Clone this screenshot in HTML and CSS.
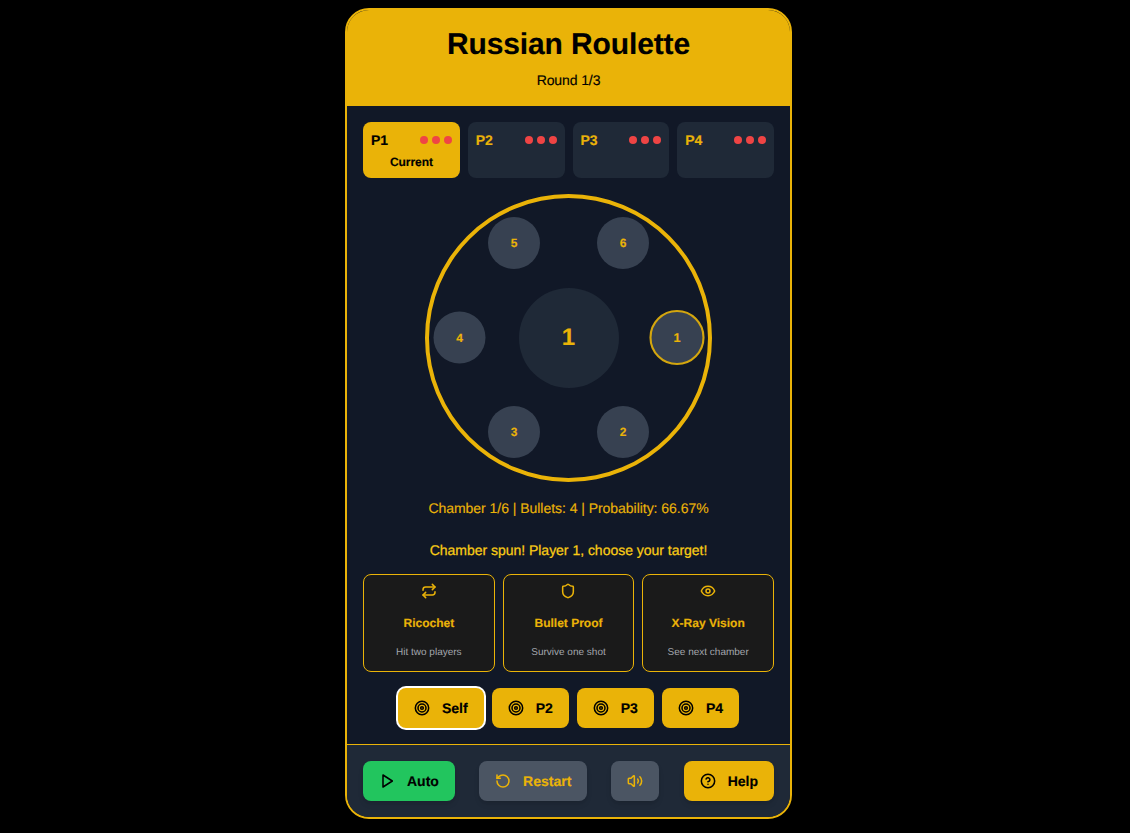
FILE: index.html
```html
<!DOCTYPE html>
<html lang="en">
<head>
<meta charset="utf-8">
<title>Russian Roulette</title>
<link rel="stylesheet" href="styles.css">
</head>
<body>
<div class="game">
  <header class="header">
    <h1>Russian Roulette</h1>
    <p>Round 1/3</p>
  </header>
  <main class="main">
    <div class="players">
      <div class="player current">
        <div class="player-top"><span class="pname">P1</span><span class="lives"><i></i><i></i><i></i></span></div>
        <div class="pstatus">Current</div>
      </div>
      <div class="player">
        <div class="player-top"><span class="pname">P2</span><span class="lives"><i></i><i></i><i></i></span></div>
      </div>
      <div class="player">
        <div class="player-top"><span class="pname">P3</span><span class="lives"><i></i><i></i><i></i></span></div>
      </div>
      <div class="player">
        <div class="player-top"><span class="pname">P4</span><span class="lives"><i></i><i></i><i></i></span></div>
      </div>
    </div>
    <div class="drum">
      <div class="hub">1</div>
      <div class="chamber c1 active">1</div>
      <div class="chamber c2">2</div>
      <div class="chamber c3">3</div>
      <div class="chamber c4">4</div>
      <div class="chamber c5">5</div>
      <div class="chamber c6">6</div>
    </div>
    <p class="stats">Chamber 1/6 | Bullets: 4 | Probability: 66.67%</p>
    <p class="message">Chamber spun! Player 1, choose your target!</p>
    <div class="abilities">
      <div class="ability">
        <svg class="icon" viewBox="0 0 24 24"><path d="m17 2 4 4-4 4"/><path d="M3 11v-1a4 4 0 0 1 4-4h14"/><path d="m7 22-4-4 4-4"/><path d="M21 13v1a4 4 0 0 1-4 4H3"/></svg>
        <div class="ab-title">Ricochet</div>
        <div class="ab-desc">Hit two players</div>
      </div>
      <div class="ability">
        <svg class="icon" viewBox="0 0 24 24"><path d="M20 13c0 5-3.500 7.500-7.660 8.950a1 1 0 0 1-.670-.010C7.500 20.500 4 18 4 13V6a1 1 0 0 1 1-1c2 0 4.500-1.200 6.240-2.720a1.170 1.170 0 0 1 1.520 0C14.510 3.810 17 5 19 5a1 1 0 0 1 1 1z"/></svg>
        <div class="ab-title">Bullet Proof</div>
        <div class="ab-desc">Survive one shot</div>
      </div>
      <div class="ability">
        <svg class="icon" viewBox="0 0 24 24"><path d="M2 12s3-7 10-7 10 7 10 7-3 7-10 7-10-7-10-7Z"/><circle cx="12" cy="12" r="3"/></svg>
        <div class="ab-title">X-Ray Vision</div>
        <div class="ab-desc">See next chamber</div>
      </div>
    </div>
    <div class="targets">
      <button class="target selected"><svg class="icon" viewBox="0 0 24 24"><circle cx="12" cy="12" r="10"/><circle cx="12" cy="12" r="6"/><circle cx="12" cy="12" r="2"/></svg>Self</button>
      <button class="target"><svg class="icon" viewBox="0 0 24 24"><circle cx="12" cy="12" r="10"/><circle cx="12" cy="12" r="6"/><circle cx="12" cy="12" r="2"/></svg>P2</button>
      <button class="target"><svg class="icon" viewBox="0 0 24 24"><circle cx="12" cy="12" r="10"/><circle cx="12" cy="12" r="6"/><circle cx="12" cy="12" r="2"/></svg>P3</button>
      <button class="target"><svg class="icon" viewBox="0 0 24 24"><circle cx="12" cy="12" r="10"/><circle cx="12" cy="12" r="6"/><circle cx="12" cy="12" r="2"/></svg>P4</button>
    </div>
  </main>
  <footer class="footer">
    <button class="fbtn auto"><svg class="icon" viewBox="0 0 24 24"><polygon points="6 3 20 12 6 21 6 3"/></svg>Auto</button>
    <button class="fbtn muted"><svg class="icon" viewBox="0 0 24 24"><path d="M3 12a9 9 0 1 0 9-9 9.750 9.750 0 0 0-6.740 2.740L3 8"/><path d="M3 3v5h5"/></svg>Restart</button>
    <button class="fbtn muted sound"><svg class="icon" viewBox="0 0 24 24"><path d="M11 4.702a.705.705 0 0 0-1.203-.498L6.413 7.587A1.400 1.400 0 0 1 5.416 8H3a1 1 0 0 0-1 1v6a1 1 0 0 0 1 1h2.416a1.400 1.400 0 0 1 .997.413l3.383 3.384A.705.705 0 0 0 11 19.298z"/><path d="M16 9a5 5 0 0 1 0 6"/><path d="M19.364 18.364a9 9 0 0 0 0-12.728"/></svg></button>
    <button class="fbtn help"><svg class="icon" viewBox="0 0 24 24"><circle cx="12" cy="12" r="10"/><path d="M9.090 9a3 3 0 0 1 5.830 1c0 2-3 3-3 3"/><path d="M12 17h.01"/></svg>Help</button>
  </footer>
</div>
</body>
</html>
```
FILE: styles.css
```css
* { box-sizing: border-box; margin: 0; padding: 0; }
html, body { height: 100%; }
body {
  background: #000;
  font-family: "Liberation Sans", Arial, sans-serif;
  text-rendering: geometricPrecision;
  -webkit-text-stroke: 0.15px currentColor;
  padding: 8px 0 0 345px;
}
svg { fill: none; stroke: currentColor; stroke-width: 2.300; stroke-linecap: round; stroke-linejoin: round; flex: none; display: block; }
.icon { width: 16px; height: 16px; }

.game {
  width: 447px;
  height: 811px;
  border: 2px solid #eab308;
  border-radius: 24px;
  overflow: hidden;
  background: #111827;
  display: flex;
  flex-direction: column;
}
.header {
  background: #eab308;
  color: #000;
  text-align: center;
  height: 96px;
  padding-top: 17px;
}
.header h1 { font-size: 30px; line-height: 36px; font-weight: 700; letter-spacing: -0.120px; }
.header p { font-size: 14px; line-height: 20px; margin-top: 7px; letter-spacing: -0.100px; }

.main { flex: 1; padding: 16px; display: flex; flex-direction: column; }
.players { display: grid; grid-template-columns: repeat(4, 1fr); gap: 8px; height: 56px; }
.player { background: #1f2937; border-radius: 8px; padding: 8px; color: #eab308; }
.player.current { background: #eab308; color: #000; }
.player-top { display: flex; justify-content: space-between; align-items: center; height: 20px; }
.pname { font-size: 14px; font-weight: 700; }
.lives { display: flex; gap: 4px; }
.lives i { width: 8px; height: 8px; border-radius: 50%; background: #ef4444; display: block; }
.pstatus { font-size: 12px; font-weight: 700; text-align: center; line-height: 16px; margin-top: 4px; letter-spacing: -0.050px; }

.drum {
  position: relative;
  width: 287px;
  height: 288px;
  border: 4px solid #eab308;
  border-radius: 50%;
  margin: 16px auto 0;
  display: flex;
  align-items: center;
  justify-content: center;
}
.hub {
  width: 100px; height: 100px; border-radius: 50%;
  background: #1f2937; color: #eab308;
  font-size: 24px; font-weight: 700;
  display: flex; align-items: center; justify-content: center;
}
.chamber {
  position: absolute;
  left: 50%; top: 50%;
  width: 52px; height: 52px;
  margin: -26px 0 0 -26.500px;
  border-radius: 50%;
  background: #374151; color: #eab308;
  font-size: 12px; font-weight: 700;
  display: flex; align-items: center; justify-content: center;
}
.c1 { transform: translate(109px, -0.500px) scale(1.060); }
.c2 { transform: translate(55px, 94px); }
.c3 { transform: translate(-54px, 94px); }
.c4 { transform: translate(-108.500px, -0.500px); }
.c5 { transform: translate(-54px, -95px); }
.c6 { transform: translate(55px, -95px); }
.chamber.active { border: 2px solid #d4a60e; }

.stats { color: #eab308; font-size: 14px; line-height: 20px; text-align: center; margin-top: 16px; letter-spacing: -0.040px; }
.message { color: #facc15; font-size: 14px; line-height: 20px; text-align: center; margin-top: 22px; -webkit-text-stroke: 0.250px #facc15; letter-spacing: -0.020px; }

.abilities { display: grid; grid-template-columns: repeat(3, 1fr); gap: 8px; margin-top: 14px; height: 98px; }
.ability {
  background: #1a1a1a;
  border: 1px solid #eab308;
  border-radius: 8px;
  display: flex; flex-direction: column; align-items: center;
  padding-top: 8px;
  color: #eab308;
}
.ab-title { font-size: 12px; font-weight: 700; line-height: 16px; margin-top: 16px; }
.ab-desc { font-size: 10px; line-height: 14px; color: #a3a6ad; margin-top: 15px; -webkit-text-stroke: 0; }

.targets { display: flex; justify-content: center; gap: 8px; margin-top: 16px; }
.target {
  height: 40px;
  padding: 0 16px;
  display: flex; align-items: center; gap: 12px;
  background: #eab308; color: #000;
  border: 0; border-radius: 8px;
  font: 700 14px "Liberation Sans", Arial, sans-serif;
  text-rendering: geometricPrecision;
}
.target.selected { box-shadow: 0 0 0 2px #fff; }

.footer {
  flex: 1;
  height: 73px;
  background: #1f2937;
  border-top: 1px solid #eab308;
  padding: 16px;
  display: flex; justify-content: space-between; align-items: flex-start;
}
.fbtn {
  height: 40px;
  padding: 0 16px;
  display: flex; align-items: center; gap: 12px;
  border: 0; border-radius: 8px;
  font: 700 14px "Liberation Sans", Arial, sans-serif;
  text-rendering: geometricPrecision;
  box-shadow: 0 4px 6px -1px rgba(0,0,0,.1), 0 2px 4px -2px rgba(0,0,0,.1);
}
.auto { background: #22c55e; color: #000; }
.muted { background: #4b5563; color: #eab308; }
.help { background: #eab308; color: #000; }
```
